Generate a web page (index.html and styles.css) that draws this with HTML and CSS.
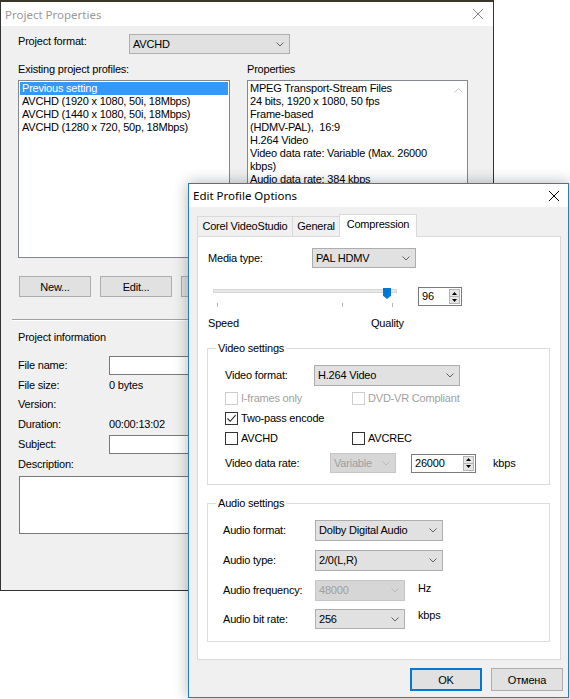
FILE: index.html
```html
<!DOCTYPE html>
<html lang="en">

<head>
    <meta charset="UTF-8">
    <title>Project Properties</title>
    <link rel="stylesheet" href="styles.css">
</head>

<body>
    <!-- background window -->
    <div class="window project-window">
        <div class="titlebar">
            <span class="title inactive">Project Properties</span>
            <svg class="close-icon" width="10" height="10" viewBox="0 0 10 10">
                <path d="M0 0L10 10M10 0L0 10" stroke="#808080" stroke-width="1" fill="none"/>
            </svg>
        </div>
        <div class="project-body">
            <div class="format-row">
                <span class="format-label">Project format:</span>
                <div class="combo format-combo">
                    <span>AVCHD</span>
                    <svg class="chevron" width="8" height="5" viewBox="0 0 8 5"><path d="M0.5 0.5L4 4L7.5 0.5" fill="none" stroke="#606060"/></svg>
                </div>
            </div>

            <div class="profile-cols profile-labels">
                <span>Existing project profiles:</span>
                <span>Properties</span>
            </div>
            <div class="profile-cols profile-boxes">
                <ul class="listbox">
                    <li class="selected">Previous setting</li>
                    <li>AVCHD (1920 x 1080, 50i, 18Mbps)</li>
                    <li>AVCHD (1440 x 1080, 50i, 18Mbps)</li>
                    <li>AVCHD (1280 x 720, 50p, 18Mbps)</li>
                </ul>
                <div class="props-box">
                    <div class="props-text">
                        MPEG Transport-Stream Files<br>
                        24 bits, 1920 x 1080, 50 fps<br>
                        Frame-based<br>
                        (HDMV-PAL),&nbsp; 16:9<br>
                        H.264 Video<br>
                        Video data rate: Variable (Max. 26000<br>
                        kbps)<br>
                        Audio data rate: 384 kbps
                    </div>
                    <div class="props-scroll">
                        <svg width="9" height="5" viewBox="0 0 9 5"><path d="M0.5 4.5L4.5 0.5L8.5 4.5" fill="none" stroke="#c2c2c2"/></svg>
                    </div>
                </div>
            </div>

            <div class="button-row">
                <button class="btn">New...</button>
                <button class="btn">Edit...</button>
                <button class="btn">Delete</button>
            </div>

            <div class="separator"></div>

            <div class="section-title">Project information</div>
            <div class="info-grid">
                <span>File name:</span><div class="field"></div>
                <span>File size:</span><span>0 bytes</span>
                <span>Version:</span><span></span>
                <span>Duration:</span><span>00:00:13:02</span>
                <span>Subject:</span><div class="field"></div>
            </div>
            <div class="desc-label">Description:</div>
            <div class="textarea"></div>
        </div>
    </div>

    <!-- front dialog -->
    <div class="window dialog">
        <div class="titlebar">
            <span class="title">Edit Profile Options</span>
            <svg class="close-icon" width="10" height="10" viewBox="0 0 10 10">
                <path d="M0 0L10 10M10 0L0 10" stroke="#000" stroke-width="1" fill="none"/>
            </svg>
        </div>
        <div class="dialog-body">
            <div class="tabs">
                <div class="tab tab-corel">Corel VideoStudio</div>
                <div class="tab tab-general">General</div>
                <div class="tab tab-compression active">Compression</div>
            </div>

            <div class="tab-panel">
                <div class="media-row">
                    <span class="media-label">Media type:</span>
                    <div class="combo media-combo">
                        <span>PAL HDMV</span>
                        <svg class="chevron" width="8" height="5" viewBox="0 0 8 5"><path d="M0.5 0.5L4 4L7.5 0.5" fill="none" stroke="#606060"/></svg>
                    </div>
                </div>

                <div class="slider-row">
                    <div class="slider">
                        <div class="slider-track"></div>
                        <div class="slider-thumb" style="left: 171px;"></div>
                        <span class="tick" style="left: 5px;"></span>
                        <span class="tick" style="left: 130px;"></span>
                        <span class="tick" style="left: 180px;"></span>
                    </div>
                    <div class="spin quality-spin">
                        <span class="spin-value">96</span>
                        <div class="spin-btns">
                            <div class="spin-btn"><svg width="5" height="3" viewBox="0 0 5 3"><path d="M0 3L2.5 0L5 3Z" fill="#000"/></svg></div>
                            <div class="spin-btn"><svg width="5" height="3" viewBox="0 0 5 3"><path d="M0 0L2.5 3L5 0Z" fill="#000"/></svg></div>
                        </div>
                    </div>
                </div>

                <div class="scale-labels">
                    <span>Speed</span>
                    <span>Quality</span>
                </div>

                <fieldset class="group video-group">
                    <legend>Video settings</legend>
                    <div class="form-row video-format-row">
                        <span class="row-label">Video format:</span>
                        <div class="combo video-combo">
                            <span>H.264 Video</span>
                            <svg class="chevron" width="8" height="5" viewBox="0 0 8 5"><path d="M0.5 0.5L4 4L7.5 0.5" fill="none" stroke="#606060"/></svg>
                        </div>
                    </div>
                    <div class="check-grid">
                        <label class="check disabled"><span class="box"></span>I-frames only</label>
                        <label class="check disabled"><span class="box"></span>DVD-VR Compliant</label>
                        <label class="check wide"><span class="box">
                            <svg width="11" height="11" viewBox="0 0 11 11"><path d="M1.5 5.5L4.2 8.3L9.6 2.2" fill="none" stroke="#222" stroke-width="1.1"/></svg>
                        </span>Two-pass encode</label>
                        <label class="check"><span class="box"></span>AVCHD</label>
                        <label class="check"><span class="box"></span>AVCREC</label>
                    </div>
                    <div class="form-row rate-row">
                        <span class="row-label rate-label">Video data rate:</span>
                        <div class="combo combo-disabled rate-combo">
                            <span>Variable</span>
                            <svg class="chevron" width="8" height="5" viewBox="0 0 8 5"><path d="M0.5 0.5L4 4L7.5 0.5" fill="none" stroke="#b8b8b8"/></svg>
                        </div>
                        <div class="spin rate-spin">
                            <span class="spin-value">26000</span>
                            <div class="spin-btns">
                                <div class="spin-btn"><svg width="5" height="3" viewBox="0 0 5 3"><path d="M0 3L2.5 0L5 3Z" fill="#000"/></svg></div>
                                <div class="spin-btn"><svg width="5" height="3" viewBox="0 0 5 3"><path d="M0 0L2.5 3L5 0Z" fill="#000"/></svg></div>
                            </div>
                        </div>
                        <span class="unit rate-unit">kbps</span>
                    </div>
                </fieldset>

                <fieldset class="group audio-group">
                    <legend>Audio settings</legend>
                    <div class="form-row audio-row first">
                        <span class="row-label">Audio format:</span>
                        <div class="combo audio-wide">
                            <span>Dolby Digital Audio</span>
                            <svg class="chevron" width="8" height="5" viewBox="0 0 8 5"><path d="M0.5 0.5L4 4L7.5 0.5" fill="none" stroke="#606060"/></svg>
                        </div>
                    </div>
                    <div class="form-row audio-row">
                        <span class="row-label">Audio type:</span>
                        <div class="combo audio-wide">
                            <span>2/0(L,R)</span>
                            <svg class="chevron" width="8" height="5" viewBox="0 0 8 5"><path d="M0.5 0.5L4 4L7.5 0.5" fill="none" stroke="#606060"/></svg>
                        </div>
                    </div>
                    <div class="form-row audio-row">
                        <span class="row-label">Audio frequency:</span>
                        <div class="combo combo-disabled audio-narrow">
                            <span>48000</span>
                            <svg class="chevron" width="8" height="5" viewBox="0 0 8 5"><path d="M0.5 0.5L4 4L7.5 0.5" fill="none" stroke="#b8b8b8"/></svg>
                        </div>
                        <span class="unit hz-unit">Hz</span>
                    </div>
                    <div class="form-row audio-row bitrate-row">
                        <span class="row-label">Audio bit rate:</span>
                        <div class="combo audio-narrow bitrate-combo">
                            <span>256</span>
                            <svg class="chevron" width="8" height="5" viewBox="0 0 8 5"><path d="M0.5 0.5L4 4L7.5 0.5" fill="none" stroke="#606060"/></svg>
                        </div>
                        <span class="unit">kbps</span>
                    </div>
                </fieldset>
            </div>

            <div class="dialog-buttons">
                <button class="btn btn-default">OK</button>
                <button class="btn">Отмена</button>
            </div>
        </div>
    </div>
</body>

</html>
```

FILE: styles.css
```css
* {
    box-sizing: border-box;
}

html,
body {
    margin: 0;
    padding: 0;
}

body {
    position: relative;
    width: 570px;
    height: 699px;
    overflow: hidden;
    background-color: #ffffff;
    color: #000000;
    font-family: "Liberation Sans", Arial, sans-serif;
    font-size: 11px;
    line-height: 13px;
    letter-spacing: -0.2px;
}

/* windows on the desktop */
.window {
    position: absolute;
    background-color: #f0f0f0;
}

.project-window {
    left: 0;
    top: 0;
    width: 494px;
    height: 591px;
    border: 1px solid #333333;
    border-top: 2px solid #3b3429;
}

.dialog {
    left: 188px;
    top: 183px;
    width: 381px;
    height: 515px;
    border: 1px solid #2a7bc6;
    box-shadow: 0 0 14px rgba(0, 0, 0, 0.3);
}

.titlebar {
    display: flex;
    align-items: center;
    background-color: #ffffff;
    padding-left: 4px;
}

.project-window .titlebar {
    height: 24px;
}

.dialog .titlebar {
    height: 23px;
}

.title {
    font-family: "Noto Sans", sans-serif;
    font-size: 11.5px;
    letter-spacing: 0;
}

.title.inactive {
    color: #999999;
}

.close-icon {
    margin-left: auto;
}

.project-window .close-icon {
    margin-right: 10px;
}

.dialog .close-icon {
    margin-right: 9px;
}

/* shared controls */
.combo {
    display: flex;
    align-items: center;
    height: 20px;
    padding-left: 3px;
    border: 1px solid #adadad;
    background-color: #e1e1e1;
}

.combo .chevron {
    margin-left: auto;
    margin-right: 5px;
}

.combo-disabled {
    border-color: #c6c6c6;
    background-color: #d6d6d6;
    color: #a0a0a0;
}

.btn {
    width: 72px;
    height: 21px;
    padding: 0;
    border: 1px solid #adadad;
    background-color: #e1e1e1;
    font-family: inherit;
    font-size: 11px;
    letter-spacing: -0.2px;
    color: #000000;
}

.btn-default {
    border-color: #0078d7;
    box-shadow: inset 0 0 0 1px #0078d7;
}

.spin {
    display: flex;
    height: 19px;
    border: 1px solid #7a7a7a;
    background-color: #ffffff;
}

.spin-value {
    padding-left: 3px;
    line-height: 16px;
}

.spin-btns {
    display: flex;
    flex-direction: column;
    margin-left: auto;
    width: 13px;
    padding: 1px;
}

.spin-btn {
    flex: 1;
    display: flex;
    align-items: center;
    justify-content: center;
    background-color: #e5e5e5;
    border: 1px solid #b4b4b4;
}

.spin-btn + .spin-btn {
    border-top: none;
}

/* project properties window */
.project-body {
    padding: 8px 0 0 17px;
}

.format-row {
    display: flex;
    height: 20px;
}

.format-label {
    width: 111px;
    padding-top: 1px;
}

.format-combo {
    width: 161px;
}

.profile-cols {
    display: grid;
    grid-template-columns: 212px 221px;
    column-gap: 17px;
}

.profile-labels {
    margin-top: 9px;
    height: 13px;
}

.profile-boxes {
    margin-top: 4px;
    height: 178px;
}

.listbox {
    margin: 0;
    padding: 1px;
    list-style: none;
    border: 1px solid #828790;
    background-color: #ffffff;
}

.listbox li {
    height: 13px;
    padding-left: 2px;
    white-space: nowrap;
}

.listbox li.selected {
    background-color: #3399ff;
    color: #ffffff;
}

.props-box {
    display: flex;
    border: 1px solid #828790;
    background-color: #ffffff;
}

.props-text {
    flex: 1;
    padding: 1px 2px;
    white-space: nowrap;
}

.props-scroll {
    width: 17px;
    display: flex;
    justify-content: center;
    padding-top: 7px;
}

.button-row {
    display: flex;
    gap: 9px;
    margin-top: 18px;
    padding-left: 1px;
}

.separator {
    width: 470px;
    margin: 22px 0 0 -6px;
    border-top: 1px solid #a0a0a0;
    border-bottom: 1px solid #ffffff;
}

.section-title {
    margin-top: 10px;
}

.info-grid {
    display: grid;
    grid-template-columns: 91px 366px;
    grid-template-rows: 19px 20px 19px 21px 19px;
    align-items: center;
    margin-top: 12px;
}

.field {
    height: 19px;
    border: 1px solid #7a7a7a;
    background-color: #ffffff;
}

.desc-label {
    margin-top: 4px;
}

.textarea {
    width: 456px;
    height: 58px;
    margin: 5px 0 0 1px;
    border: 1px solid #7a7a7a;
    background-color: #ffffff;
}

/* edit profile dialog */
.dialog-body {
    padding: 7px 7px 0 8px;
}

.tabs {
    display: flex;
    align-items: flex-end;
    height: 22px;
}

.tab {
    position: relative;
    height: 20px;
    line-height: 18px;
    text-align: center;
    border: 1px solid #d9d9d9;
    border-bottom: none;
    background-color: #f0f0f0;
}

.tab-corel {
    width: 96px;
}

.tab-general {
    width: 48px;
    margin-left: -1px;
}

.tab-compression {
    width: 78px;
    margin-left: -1px;
}

.tab.active {
    height: 23px;
    line-height: 18px;
    margin-bottom: -1px;
    background-color: #ffffff;
    z-index: 1;
}

.tab-panel {
    height: 424px;
    padding-left: 10px;
    border: 1px solid #d9d9d9;
    background-color: #ffffff;
}

.media-row {
    display: flex;
    align-items: center;
    margin-top: 11px;
    height: 20px;
}

.media-label {
    width: 104px;
}

.media-combo {
    width: 104px;
}

.slider-row {
    display: flex;
    margin-top: 17px;
    height: 24px;
}

.slider {
    position: relative;
    width: 188px;
    margin-left: 4px;
}

.slider-track {
    width: 184px;
    height: 4px;
    margin: 4px 0 0 1px;
    border: 1px solid #d6d6d6;
    background-color: #e7e7e7;
}

.slider-thumb {
    position: absolute;
    top: 3px;
    width: 8px;
    height: 11px;
    background-color: #0078d7;
    clip-path: polygon(0 0, 100% 0, 100% 70%, 50% 100%, 0 70%);
}

.tick {
    position: absolute;
    top: 18px;
    width: 1px;
    height: 4px;
    background-color: #b4b4b4;
}

.quality-spin {
    width: 44px;
    margin: 2px 0 0 18px;
}

.scale-labels {
    display: grid;
    grid-template-columns: 163px auto;
    margin-top: 8px;
}

.group {
    margin: 12px 0 0 -1px;
    width: 343px;
    border: 1px solid #dcdcdc;
    padding: 0;
}

.group legend {
    padding: 0 2px;
    line-height: 13px;
}

.video-group {
    padding: 0 0 11px 17px;
}

.video-group legend {
    margin-left: -9px;
}

.audio-group {
    padding: 0 0 12px 15px;
}

.audio-group legend {
    margin-left: -7px;
}

.form-row {
    display: flex;
    align-items: center;
}

.video-format-row {
    margin-top: 10px;
    height: 21px;
}

.video-format-row .row-label {
    width: 89px;
}

.video-combo {
    width: 146px;
    height: 21px;
}

.check-grid {
    display: grid;
    grid-template-columns: 127px auto;
    row-gap: 7px;
    margin-top: 6px;
}

.check {
    display: flex;
    align-items: center;
    height: 13px;
}

.check.wide {
    grid-column: 1 / 3;
}

.check .box {
    display: flex;
    align-items: center;
    justify-content: center;
    width: 13px;
    height: 13px;
    margin-right: 3px;
    border: 1px solid #333333;
    background-color: #ffffff;
}

.check.disabled {
    color: #a0a0a0;
}

.check.disabled .box {
    border-color: #cccccc;
}

.rate-row {
    margin-top: 8px;
    height: 20px;
}

.rate-label {
    width: 105px;
}

.rate-combo {
    width: 66px;
}

.rate-spin {
    width: 65px;
    margin-left: 15px;
}

.unit {
    margin-left: 13px;
}

.rate-unit {
    margin-left: 17px;
}

.audio-row {
    margin-top: 9px;
    height: 21px;
}

.audio-row.first {
    margin-top: 10px;
}

.audio-row .row-label {
    width: 92px;
}

.audio-wide {
    width: 128px;
    height: 21px;
}

.audio-narrow {
    width: 90px;
    height: 21px;
}

.hz-unit {
    margin-top: -4px;
}

.bitrate-row {
    margin-top: 8px;
    height: 20px;
    align-items: flex-start;
}

.bitrate-row .row-label {
    margin-top: 4px;
}

.bitrate-combo {
    height: 20px;
}

.dialog-buttons {
    display: flex;
    justify-content: flex-end;
    gap: 9px;
    margin: 8px -2px 0 0;
}

.dialog-buttons .btn {
    height: 23px;
}
```
